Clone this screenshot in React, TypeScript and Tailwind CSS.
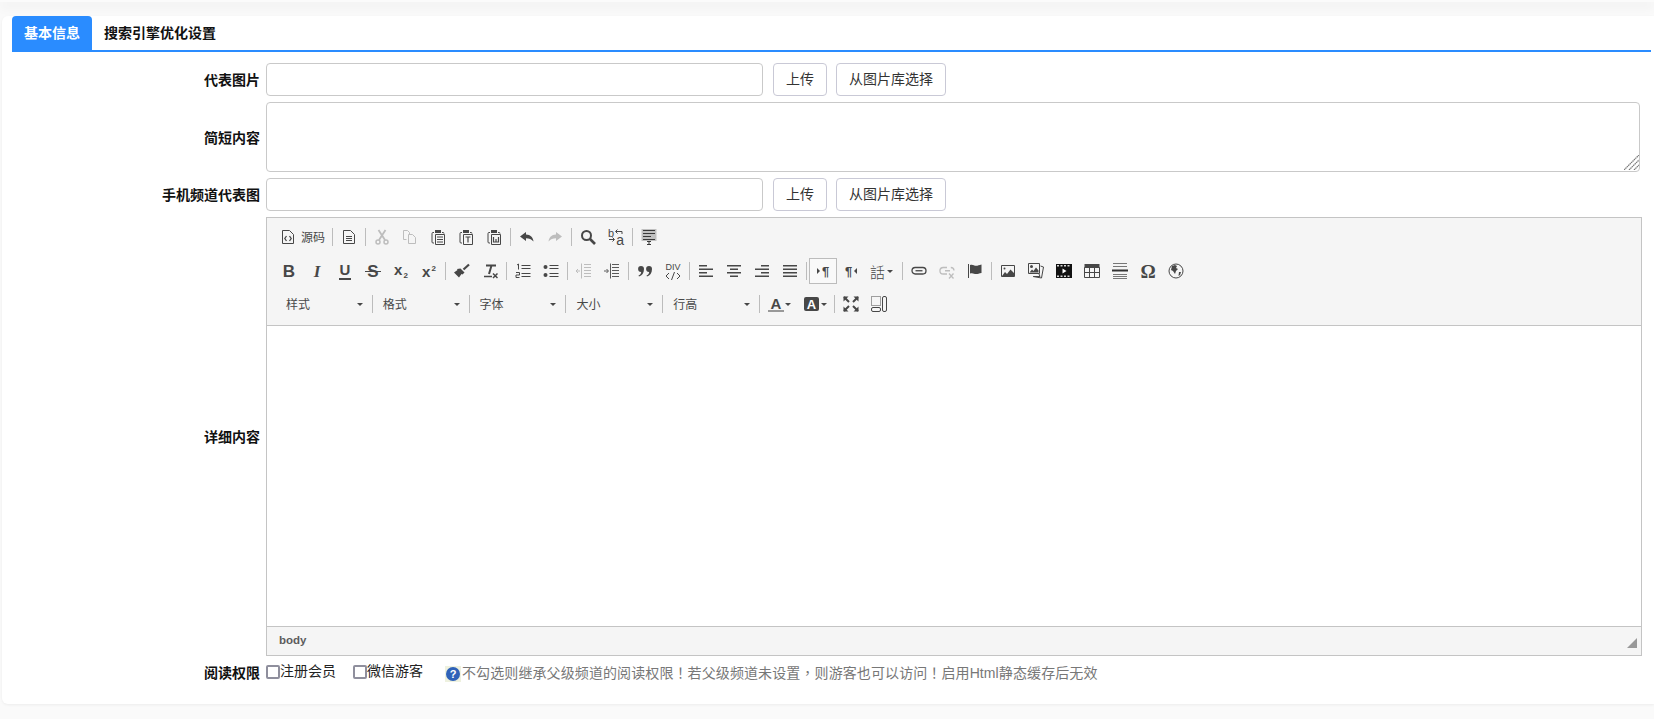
import React from "react";

const D = "#474747";
const G = "#bdbdbd";

function Ic({ children, c = D, sw = 1 }: { children: React.ReactNode; c?: string; sw?: number }) {
  return (
    <svg width="16" height="16" viewBox="0 0 16 16" fill="none" stroke={c} strokeWidth={sw} className="block">
      {children}
    </svg>
  );
}

function B({ children, w = "w-[28px]" }: { children: React.ReactNode; w?: string }) {
  return <span className={`flex h-full shrink-0 items-center justify-center ${w}`}>{children}</span>;
}

function Sep() {
  return <span className="mx-[2px] h-[18px] w-px shrink-0 bg-[#bcbcbc]" />;
}

function Arrow() {
  return <span className="h-0 w-0 shrink-0 border-x-[3px] border-t-[3px] border-x-transparent border-t-[#474747]" />;
}

function Combo({ label }: { label: string }) {
  return (
    <span className="flex h-full w-[95.8px] shrink-0 items-center justify-between pl-[10px] pr-[9px] text-[12px] text-[#484848]">
      <span className="pt-[2px]">{label}</span>
      <Arrow />
    </span>
  );
}

function ComboSep() {
  return <span className="h-[18px] w-px shrink-0 bg-[#bcbcbc]" />;
}

function Clip({ children }: { children: React.ReactNode }) {
  return (
    <Ic>
      <path d="M4 3.5H3a1 1 0 0 0-1 1V13a1 1 0 0 0 1 1h1M12 3.5h1a1 1 0 0 1 1 1" />
      <path d="M5 1h6v3H5z" fill={D} stroke="none" />
      <path d="M5.5 5.5h9v10h-9z" />
      {children}
    </Ic>
  );
}

const Glyph = ({ children, cls }: { children: React.ReactNode; cls: string }) => (
  <span className={`block text-[#474747] leading-none ${cls}`}>{children}</span>
);

function Icons({ n }: { n: string }) {
  switch (n) {
    case "source":
      return (
        <Ic>
          <path d="M2.5 1.5h7l4 4v9h-11z" />
          <path d="M6.5 7L4.8 9.5l1.7 2.5M9.5 7l1.7 2.5L9.5 12" strokeWidth="1.3" />
        </Ic>
      );
    case "new":
      return (
        <Ic>
          <path d="M2.5 1.5h7l4 4v9h-11z" />
          <path d="M5 7.5h6M5 9.5h6M5 11.5h6" />
        </Ic>
      );
    case "cut":
      return (
        <Ic c={G}>
          <circle cx="4" cy="13" r="2" strokeWidth="1.5" />
          <circle cx="12" cy="13" r="2" strokeWidth="1.5" />
          <path d="M5 11L11.5 1M11 11L4.5 1" strokeWidth="1.8" />
        </Ic>
      );
    case "copy":
      return (
        <Ic c={G}>
          <path d="M1.5 1.5h4l2 2V5M1.5 1.5v9h3" />
          <path d="M6.5 5.5h4l3 3v6h-7z" />
        </Ic>
      );
    case "paste":
      return (
        <Clip>
          <path d="M7 8h6M7 10.5h6M7 13h6" />
        </Clip>
      );
    case "pastet":
      return (
        <Clip>
          <path d="M7.5 8h5M10 8v5.5" strokeWidth="1.2" />
        </Clip>
      );
    case "pastew":
      return (
        <Clip>
          <path d="M7.5 8v5h5V8M10 10v3" strokeWidth="1.2" />
        </Clip>
      );
    case "undo":
      return (
        <Ic c="none">
          <path d="M7 3L1 7.5 7 12V9.2c3.2 0 5.3.9 7.5 3.3C14 8.5 11.5 5.8 7 5.6z" fill={D} />
        </Ic>
      );
    case "redo":
      return (
        <Ic c="none">
          <path d="M9 3l6 4.5L9 12V9.2c-3.2 0-5.3.9-7.5 3.3C2 8.5 4.5 5.8 9 5.6z" fill={G} />
        </Ic>
      );
    case "find":
      return (
        <Ic sw={2}>
          <circle cx="6.5" cy="6.5" r="4.5" />
          <path d="M10 10l5 5" strokeWidth="2.6" />
        </Ic>
      );
    case "replace":
      return (
        <span className="relative block h-[18px] w-[16px]">
          <span className="absolute left-0 top-0 text-[11px] leading-[10px] text-[#474747]">b</span>
          <span className="absolute bottom-0 right-0 text-[14px] leading-[11px] text-[#474747]">a</span>
          <svg width="16" height="18" viewBox="0 0 16 18" fill="none" stroke={D} className="block">
            <path d="M8 3.5h6V6M9.5 1.5l-2 2 2 2M1 11.5h5M4.5 9.5l2 2-2 2" />
          </svg>
        </span>
      );
    case "selectall":
      return (
        <Ic>
          <path d="M.5 0h15v12H.5z" fill="#c0c0c0" stroke="none" />
          <path d="M2 1.5h12M2 4.5h12M2 7.5h8M2 10.5h12" stroke="#3a3a3a" />
          <path d="M6 12.5h4M8 12.5v3M6 15.5h4" stroke="#3a3a3a" />
        </Ic>
      );
    case "bold":
      return <Glyph cls="text-[17px] font-bold">B</Glyph>;
    case "italic":
      return <Glyph cls="text-[17px] font-bold italic font-['Liberation_Serif',serif]">I</Glyph>;
    case "underline":
      return (
        <span className="flex flex-col items-center">
          <Glyph cls="text-[15px] font-bold">U</Glyph>
          <span className="mt-px h-[2px] w-[12px] bg-[#474747]" />
        </span>
      );
    case "strike":
      return (
        <span className="relative block">
          <Glyph cls="text-[17px] font-bold">S</Glyph>
          <span className="absolute left-[-2px] right-[-2px] top-[8px] h-[1.5px] bg-[#474747]" />
        </span>
      );
    case "sub":
      return (
        <Glyph cls="text-[15px] font-bold">
          x<span className="ml-px align-[-3px] text-[8px]">2</span>
        </Glyph>
      );
    case "sup":
      return (
        <Glyph cls="text-[15px] font-bold">
          x<span className="ml-px align-[6px] text-[8px]">2</span>
        </Glyph>
      );
    case "brush":
      return (
        <Ic c="none">
          <path d="M15 1.5l-5.5 5" stroke={D} strokeWidth="2.2" />
          <path d="M6.5 5.5l4 4-2 2-1-.5-2.5 3.5-5-5 3.5-2.5-.5-1z" fill={D} />
        </Ic>
      );
    case "remove":
      return (
        <Ic>
          <path d="M4 2.5h10M9.5 2.5L7 11" strokeWidth="2" />
          <path d="M2 13.5h8" strokeWidth="1.5" />
          <path d="M11 10.5l4.5 4.5M15.5 10.5L11 15" strokeWidth="1.5" />
        </Ic>
      );
    case "ol":
      return (
        <Ic>
          <path d="M6.5 2.5h9M6.5 5.5h9M6.5 10.5h9M6.5 13.5h9" />
          <path d="M2 2l1.5-1v5.5M1 9.5h3.5v2.5H1v2.5h3.5" />
        </Ic>
      );
    case "ul":
      return (
        <Ic>
          <path d="M6.5 2.5h9M6.5 5.5h9M6.5 10.5h9M6.5 13.5h9" />
          <circle cx="2.5" cy="4" r="2" fill={D} stroke="none" />
          <circle cx="2.5" cy="12" r="2" fill={D} stroke="none" />
        </Ic>
      );
    case "outdent":
      return (
        <Ic c={G}>
          <path d="M8 1.5h7M8 4.5h7M8 7.5h7M8 10.5h7M8 13.5h7M5.5 .5v15" />
          <path d="M4 8H0M2 6L0 8l2 2" />
        </Ic>
      );
    case "indent":
      return (
        <Ic c="#5a5a5a">
          <path d="M8 1.5h7M8 4.5h7M8 7.5h7M8 10.5h7M8 13.5h7M6.5 .5v15" />
          <path d="M0 8h4M2.5 6L4.5 8l-2 2" />
        </Ic>
      );
    case "quote":
      return (
        <Ic c="none">
          <path d="M4 3a3 3 0 0 1 3 3c0 4-2 6.5-5 7.5l-.5-1C3 12 4 11 4.2 9A3 3 0 0 1 4 3zM12 3a3 3 0 0 1 3 3c0 4-2 6.5-5 7.5l-.5-1C11 12 12 11 12.2 9A3 3 0 0 1 12 3z" fill={D} />
        </Ic>
      );
    case "div":
      return (
        <span className="flex w-[16px] flex-col items-center">
          <span className="text-[9px] leading-[9px] text-[#474747]">DIV</span>
          <svg width="16" height="8" viewBox="0 0 16 8" fill="none" stroke={D} className="block">
            <path d="M4 1L1 4l3 3M12 1l3 3-3 3M9.5 0l-3 8" />
          </svg>
        </span>
      );
    case "left":
      return (
        <Ic sw={1.5}>
          <path d="M1 2.75h8M1 6.25h14M1 9.75h8M1 13.25h14" />
        </Ic>
      );
    case "center":
      return (
        <Ic sw={1.5}>
          <path d="M1 2.75h14M4 6.25h8M1 9.75h14M4 13.25h8" />
        </Ic>
      );
    case "right":
      return (
        <Ic sw={1.5}>
          <path d="M7 2.75h8M1 6.25h14M7 9.75h8M1 13.25h14" />
        </Ic>
      );
    case "justify":
      return (
        <Ic sw={1.5}>
          <path d="M1 2.75h14M1 6.25h14M1 9.75h14M1 13.25h14" />
        </Ic>
      );
    case "ltr":
      return (
        <span className="flex items-center gap-[2px]">
          <span className="h-0 w-0 border-y-[3px] border-l-[3px] border-y-transparent border-l-[#474747]" />
          <Glyph cls="text-[13px] font-bold">¶</Glyph>
        </span>
      );
    case "rtl":
      return (
        <span className="flex items-center gap-[2px]">
          <Glyph cls="text-[13px] font-bold">¶</Glyph>
          <span className="h-0 w-0 border-y-[3px] border-r-[3px] border-y-transparent border-r-[#474747]" />
        </span>
      );
    case "link":
      return (
        <Ic sw={1.3}>
          <rect x="1" y="4.5" width="14" height="6.5" rx="3.2" />
          <path d="M4.5 7.75h7" />
        </Ic>
      );
    case "unlink":
      return (
        <Ic c={G} sw={1.3}>
          <path d="M8 4.5H4.2a3.2 3.2 0 0 0 0 6.5H8M6 7.75h5M11.8 4.5a3.2 3.2 0 0 1 3.2 3" />
          <path d="M10 10.5l4.5 5M14.5 10.5l-4.5 5" />
        </Ic>
      );
    case "anchor":
      return (
        <Ic>
          <path d="M1.5 1v14" />
          <path d="M3 2c3-1 4 .8 6 .8S12 2 14.5 1.5V10c-2.5.5-3.5 1-5.5 1S6 9.5 3 10.5z" fill={D} stroke="none" />
        </Ic>
      );
    case "image":
      return (
        <Ic>
          <path d="M1.5 2.5h13v11h-13z" />
          <circle cx="4.5" cy="5.5" r="1" fill={D} stroke="none" />
          <path d="M2 13l3-4 2 2 3.5-4.5L14 10v3z" fill={D} stroke="none" />
        </Ic>
      );
    case "images":
      return (
        <Ic>
          <path d="M12.5 3l3 1-2 11-8.5-1.5" />
          <path d="M11 11l1 2.5-6 0" />
          <path d="M.5.5h11v10H.5z" fill="#f5f5f5" />
          <path d="M1.5 9.5l2.5-3 1.5 1.5 2.5-3.5 2.5 3v2H1.5z" fill={D} stroke="none" />
          <circle cx="3.5" cy="3.5" r="1.5" fill={D} stroke="none" />
        </Ic>
      );
    case "video":
      return (
        <Ic>
          <path d="M0 1h16v14H0z" fill="#111" stroke="none" />
          <path d="M1 2h2v1.5H1zM4.5 2h2v1.5h-2zM8 2h2v1.5H8zM11.500 2h2v1.500h-2zM1 12.500h2V14H1zM4.500 12.500h2V14h-2zM8 12.500h2V14H8zM11.500 12.500h2V14h-2z" fill="#d8d8d8" stroke="none" />
          <path d="M6.5 5.5L10.5 8l-4 2.5z" fill="#fff" stroke="none" />
        </Ic>
      );
    case "table":
      return (
        <Ic>
          <path d="M.5 1h15v4h-15z" fill={D} stroke="none" />
          <path d="M.5 4.5h15v10H.5zM.5 9.5h15M5.5 4.5v10M10.5 4.5v10" />
        </Ic>
      );
    case "hr":
      return (
        <Ic c="#777">
          <path d="M1 .5h14M1 3.5h14M1 11.5h14M1 13.5h14M1 15.5h14" />
          <path d="M0 7.5h16" stroke="#333" strokeWidth="2" />
        </Ic>
      );
    case "omega":
      return <Glyph cls="text-[19px] font-bold font-['Liberation_Serif',serif]">Ω</Glyph>;
    case "globe":
      return (
        <Ic>
          <circle cx="8" cy="8" r="7" />
          <path d="M4 3l3-1 2 1-1 2 2 1-2 2-1 3-2-3-2-1zM11 9h2l-1 3-1.5 1z" fill={D} stroke="none" />
        </Ic>
      );
    case "textcolor":
      return (
        <span className="relative block h-[16px] w-[16px]">
          <Glyph cls="text-center text-[15px] font-bold">A</Glyph>
          <span className="absolute bottom-0 left-0 h-[2px] w-full bg-[#999]" />
        </span>
      );
    case "bgcolor":
      return (
        <span className="flex h-[14px] w-[15px] items-center justify-center rounded-[2px] bg-[#474747] text-[13px] font-bold leading-none text-white">A</span>
      );
    case "max":
      return (
        <Ic sw={2}>
          <path d="M1 1l5 5M15 1l-5 5M1 15l5-5M15 15l-5-5" />
          <path d="M.5.5h5l-5 5zM15.5.5h-5l5 5zM.5 15.5h5l-5-5zM15.5 15.5h-5l5-5z" fill={D} stroke="none" />
        </Ic>
      );
    case "blocks":
      return (
        <Ic>
          <path d="M.5.5h9v9h-9z" strokeDasharray="1 1" />
          <rect x=".5" y="11.5" width="9" height="4" rx="1.5" />
          <rect x="11.5" y=".5" width="4" height="15" rx="1.5" />
        </Ic>
      );
    default:
      return null;
  }
}

function I({ n }: { n: string }) {
  return (
    <B>
      <Icons n={n} />
    </B>
  );
}

function Row({ label, children }: { label: string; children: React.ReactNode }) {
  return (
    <div className="flex items-center">
      <div className="w-[248px] shrink-0 pt-[2px] text-right text-[14px] font-bold text-[#111]">{label}</div>
      <div className="ml-[6px] flex flex-1 items-center">{children}</div>
    </div>
  );
}

function UploadRow({ label }: { label: string }) {
  return (
    <Row label={label}>
      <input className="h-[33px] w-[497px] rounded-[4px] border border-[#c9c9c9] bg-white" />
      <button className="ml-[10px] h-[33px] w-[54px] rounded-[4px] border border-[#c9c9d6] bg-white text-[14px] text-[#333]">上传</button>
      <button className="ml-[9px] h-[33px] w-[110px] rounded-[4px] border border-[#c9c9d6] bg-white text-[14px] text-[#333]">从图片库选择</button>
    </Row>
  );
}

function Check({ label }: { label: string }) {
  return (
    <span className="mb-[2px] flex items-center text-[14px] text-[#222]">
      <span className="h-[14px] w-[14px] rounded-[2px] border-2 border-[#8f8f9d] bg-white" />
      {label}
    </span>
  );
}

export default function App() {
  return (
    <div className="h-[719px] overflow-hidden bg-[#fafafa] font-['Liberation_Sans','Noto_Sans_CJK_SC',sans-serif]">
      <div className="h-[2px] bg-[#fbfbfb] shadow-[0_3px_12px_rgba(0,0,0,0.16)]" />
      <div className="ml-[2px] mt-[14px] h-[688px] rounded-l-[6px] bg-white pl-[10px] pr-[3px] shadow-[0_1px_3px_rgba(0,0,0,0.06)]">
        <div className="flex h-[36px] border-b-2 border-[#2a8cff]">
          <div className="flex w-[80px] items-center justify-center rounded-t-[4px] bg-[#2a8cff] text-[14px] font-bold text-white">基本信息</div>
          <div className="flex items-center px-[12px] text-[14px] font-bold text-[#111]">搜索引擎优化设置</div>
        </div>

        <div className="mt-[11px] flex flex-col gap-[6px]">
          <UploadRow label="代表图片" />
          <Row label="简短内容">
            <div className="relative h-[70px] w-[1374px]">
              <textarea className="block h-full w-full resize-none rounded-[4px] border border-[#c9c9c9] bg-white" />
              <svg width="15" height="15" viewBox="0 0 15 15" className="absolute bottom-[2px] right-[1px]" stroke="#777" strokeWidth="1.2" fill="none">
                <path d="M0 15L15 0M5 15L15 5M10 15l5-5" strokeDasharray="1.5 .5" />
              </svg>
            </div>
          </Row>
          <UploadRow label="手机频道代表图" />
          <Row label="详细内容">
            <div className="flex h-[439px] w-[1376px] flex-col border border-[#c4c4c4]">
              <div className="h-[108px] border-b border-[#c4c4c4] bg-[#f5f5f5] pl-[8px] pt-[2px]">
                <div className="flex h-[34px] items-center">
                  <span className="flex h-full w-[55px] shrink-0 items-center gap-[5px] pl-[5px] text-[12px] text-[#484848]">
                    <Icons n="source" />
                    <span className="pt-[2px]">源码</span>
                  </span>
                  <Sep />
                  <I n="new" />
                  <Sep />
                  <I n="cut" />
                  <I n="copy" />
                  <I n="paste" />
                  <I n="pastet" />
                  <I n="pastew" />
                  <Sep />
                  <I n="undo" />
                  <I n="redo" />
                  <Sep />
                  <I n="find" />
                  <I n="replace" />
                  <Sep />
                  <I n="selectall" />
                </div>
                <div className="flex h-[34px] items-center">
                  <I n="bold" />
                  <I n="italic" />
                  <I n="underline" />
                  <I n="strike" />
                  <I n="sub" />
                  <I n="sup" />
                  <Sep />
                  <I n="brush" />
                  <I n="remove" />
                  <Sep />
                  <I n="ol" />
                  <I n="ul" />
                  <Sep />
                  <I n="outdent" />
                  <I n="indent" />
                  <Sep />
                  <I n="quote" />
                  <I n="div" />
                  <Sep />
                  <I n="left" />
                  <I n="center" />
                  <I n="right" />
                  <I n="justify" />
                  <Sep />
                  <span className="flex h-[26px] w-[28px] shrink-0 items-center justify-center border border-[#bcbcbc] bg-[#f9f9f9]">
                    <Icons n="ltr" />
                  </span>
                  <I n="rtl" />
                  <span className="flex h-full w-[35px] shrink-0 items-center gap-[2px] pl-[5px]">
                    <Glyph cls="text-[15px] font-light font-['Noto_Sans_CJK_TC',sans-serif]">話</Glyph>
                    <Arrow />
                  </span>
                  <Sep />
                  <I n="link" />
                  <I n="unlink" />
                  <I n="anchor" />
                  <Sep />
                  <I n="image" />
                  <I n="images" />
                  <I n="video" />
                  <I n="table" />
                  <I n="hr" />
                  <I n="omega" />
                  <I n="globe" />
                </div>
                <div className="flex h-[32px] items-center pl-[1px]">
                  <Combo label="样式" />
                  <ComboSep />
                  <Combo label="格式" />
                  <ComboSep />
                  <Combo label="字体" />
                  <ComboSep />
                  <Combo label="大小" />
                  <ComboSep />
                  <Combo label="行高" />
                  <ComboSep />
                  <span className="ml-[2px] flex h-full w-[35px] shrink-0 items-center gap-[1px] pl-[6px]">
                    <Icons n="textcolor" />
                    <Arrow />
                  </span>
                  <span className="flex h-full w-[35px] shrink-0 items-center gap-[2px] pl-[7px]">
                    <Icons n="bgcolor" />
                    <Arrow />
                  </span>
                  <Sep />
                  <I n="max" />
                  <I n="blocks" />
                </div>
              </div>
              <div className="flex-1 bg-white" />
              <div className="flex h-[29px] items-center justify-between border-t border-[#c4c4c4] bg-[#f5f5f5] pl-[12px] pr-[4px]">
                <span className="text-[11.5px] font-bold text-[#5c5c5c]">body</span>
                <svg width="10" height="10" viewBox="0 0 10 10" className="mt-[4px]">
                  <path d="M10 0v10H0z" fill="#999" />
                </svg>
              </div>
            </div>
          </Row>
        </div>

        <div className="mt-[5px]">
          <Row label="阅读权限">
            <Check label="注册会员" />
            <span className="ml-[17px]">
              <Check label="微信游客" />
            </span>
            <svg width="16" height="16" viewBox="0 0 16 16" className="ml-[22px] mt-[3px] shrink-0">
              <path d="M0 0h16v16H0z" fill="#eef1df" />
              <circle cx="8" cy="8" r="7" fill="#2f62b8" />
              <text x="8" y="12" textAnchor="middle" fontSize="11" fontWeight="700" fill="#fff" fontFamily="Liberation Sans">?</text>
            </svg>
            <span className="ml-[1px] mt-[1px] text-[14px] tracking-[0.1px] text-[#777]">
              不勾选则继承父级频道的阅读权限<span className="font-['Noto_Sans_CJK_TC',sans-serif]">！</span>若父级频道未设置<span className="font-['Noto_Sans_CJK_TC',sans-serif]">，</span>则游客也可以访问<span className="font-['Noto_Sans_CJK_TC',sans-serif]">！</span>启用Html静态缓存后无效
            </span>
          </Row>
        </div>
      </div>
    </div>
  );
}
